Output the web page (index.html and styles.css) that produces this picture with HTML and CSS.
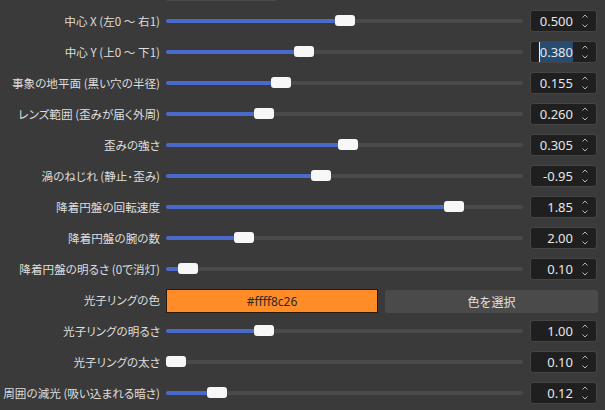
FILE: index.html
```html
<!DOCTYPE html>
<html lang="ja">
<head>
<meta charset="utf-8">
<link rel="stylesheet" href="styles.css">
</head>
<body>
<div class="panel">
  <div class="top-edge"><div class="top-btn"></div></div>

  <div class="row">
    <div class="label">中心 X (左0 〜 右1)</div>
    <div class="ctrl">
      <div class="slider" style="--v:0.5"><div class="fill"></div><div class="handle"></div></div>
      <div class="spin"><span class="val">0.500</span><span class="arrows"><svg viewBox="0 0 8 18" width="8" height="18"><path d="M1.5 5.5 4 3 6.5 5.5M1.5 12.5 4 15 6.5 12.5" fill="none" stroke="#b8b8b8" stroke-width="1"/></svg></span></div>
    </div>
  </div>

  <div class="row">
    <div class="label">中心 Y (上0 〜 下1)</div>
    <div class="ctrl">
      <div class="slider" style="--v:0.38"><div class="fill"></div><div class="handle"></div></div>
      <div class="spin"><span class="val"><span class="sel">0.380</span></span><span class="arrows"><svg viewBox="0 0 8 18" width="8" height="18"><path d="M1.5 5.5 4 3 6.5 5.5M1.5 12.5 4 15 6.5 12.5" fill="none" stroke="#b8b8b8" stroke-width="1"/></svg></span></div>
    </div>
  </div>

  <div class="row">
    <div class="label">事象の地平面 (黒い穴の半径)</div>
    <div class="ctrl">
      <div class="slider" style="--v:0.312"><div class="fill"></div><div class="handle"></div></div>
      <div class="spin"><span class="val">0.155</span><span class="arrows"><svg viewBox="0 0 8 18" width="8" height="18"><path d="M1.5 5.5 4 3 6.5 5.5M1.5 12.5 4 15 6.5 12.5" fill="none" stroke="#b8b8b8" stroke-width="1"/></svg></span></div>
    </div>
  </div>

  <div class="row">
    <div class="label">レンズ範囲 (歪みが届く外周)</div>
    <div class="ctrl">
      <div class="slider" style="--v:0.262"><div class="fill"></div><div class="handle"></div></div>
      <div class="spin"><span class="val">0.260</span><span class="arrows"><svg viewBox="0 0 8 18" width="8" height="18"><path d="M1.5 5.5 4 3 6.5 5.5M1.5 12.5 4 15 6.5 12.5" fill="none" stroke="#b8b8b8" stroke-width="1"/></svg></span></div>
    </div>
  </div>

  <div class="row">
    <div class="label">歪みの強さ</div>
    <div class="ctrl">
      <div class="slider" style="--v:0.51"><div class="fill"></div><div class="handle"></div></div>
      <div class="spin"><span class="val">0.305</span><span class="arrows"><svg viewBox="0 0 8 18" width="8" height="18"><path d="M1.5 5.5 4 3 6.5 5.5M1.5 12.5 4 15 6.5 12.5" fill="none" stroke="#b8b8b8" stroke-width="1"/></svg></span></div>
    </div>
  </div>

  <div class="row">
    <div class="label">渦のねじれ (静止･歪み)</div>
    <div class="ctrl">
      <div class="slider" style="--v:0.43"><div class="fill"></div><div class="handle"></div></div>
      <div class="spin"><span class="val">-0.95</span><span class="arrows"><svg viewBox="0 0 8 18" width="8" height="18"><path d="M1.5 5.5 4 3 6.5 5.5M1.5 12.5 4 15 6.5 12.5" fill="none" stroke="#b8b8b8" stroke-width="1"/></svg></span></div>
    </div>
  </div>

  <div class="row">
    <div class="label">降着円盤の回転速度</div>
    <div class="ctrl">
      <div class="slider" style="--v:0.825"><div class="fill"></div><div class="handle"></div></div>
      <div class="spin"><span class="val">1.85</span><span class="arrows"><svg viewBox="0 0 8 18" width="8" height="18"><path d="M1.5 5.5 4 3 6.5 5.5M1.5 12.5 4 15 6.5 12.5" fill="none" stroke="#b8b8b8" stroke-width="1"/></svg></span></div>
    </div>
  </div>

  <div class="row">
    <div class="label">降着円盤の腕の数</div>
    <div class="ctrl">
      <div class="slider" style="--v:0.203"><div class="fill"></div><div class="handle"></div></div>
      <div class="spin"><span class="val">2.00</span><span class="arrows"><svg viewBox="0 0 8 18" width="8" height="18"><path d="M1.5 5.5 4 3 6.5 5.5M1.5 12.5 4 15 6.5 12.5" fill="none" stroke="#b8b8b8" stroke-width="1"/></svg></span></div>
    </div>
  </div>

  <div class="row">
    <div class="label">降着円盤の明るさ (0で消灯)</div>
    <div class="ctrl">
      <div class="slider" style="--v:0.036"><div class="fill"></div><div class="handle"></div></div>
      <div class="spin"><span class="val">0.10</span><span class="arrows"><svg viewBox="0 0 8 18" width="8" height="18"><path d="M1.5 5.5 4 3 6.5 5.5M1.5 12.5 4 15 6.5 12.5" fill="none" stroke="#b8b8b8" stroke-width="1"/></svg></span></div>
    </div>
  </div>

  <div class="row">
    <div class="label">光子リングの色</div>
    <div class="ctrl color-ctrl">
      <div class="swatch">#ffff8c26</div>
      <button class="pick">色を選択</button>
    </div>
  </div>

  <div class="row">
    <div class="label">光子リングの明るさ</div>
    <div class="ctrl">
      <div class="slider" style="--v:0.262"><div class="fill"></div><div class="handle"></div></div>
      <div class="spin"><span class="val">1.00</span><span class="arrows"><svg viewBox="0 0 8 18" width="8" height="18"><path d="M1.5 5.5 4 3 6.5 5.5M1.5 12.5 4 15 6.5 12.5" fill="none" stroke="#b8b8b8" stroke-width="1"/></svg></span></div>
    </div>
  </div>

  <div class="row">
    <div class="label">光子リングの太さ</div>
    <div class="ctrl">
      <div class="slider" style="--v:0"><div class="fill"></div><div class="handle"></div></div>
      <div class="spin"><span class="val">0.10</span><span class="arrows"><svg viewBox="0 0 8 18" width="8" height="18"><path d="M1.5 5.5 4 3 6.5 5.5M1.5 12.5 4 15 6.5 12.5" fill="none" stroke="#b8b8b8" stroke-width="1"/></svg></span></div>
    </div>
  </div>

  <div class="row">
    <div class="label">周囲の減光 (吸い込まれる暗さ)</div>
    <div class="ctrl">
      <div class="slider" style="--v:0.121"><div class="fill"></div><div class="handle"></div></div>
      <div class="spin"><span class="val">0.12</span><span class="arrows"><svg viewBox="0 0 8 18" width="8" height="18"><path d="M1.5 5.5 4 3 6.5 5.5M1.5 12.5 4 15 6.5 12.5" fill="none" stroke="#b8b8b8" stroke-width="1"/></svg></span></div>
    </div>
  </div>
</div>
</body>
</html>
```

FILE: styles.css
```css
html, body {
  margin: 0;
  padding: 0;
  background: #3a3a3a;
  height: 100%;
  overflow: hidden;
}

.panel {
  width: 605px;
  display: flex;
  flex-direction: column;
  gap: 9px;
  font-family: "Noto Sans CJK JP", "Noto Sans", sans-serif;
  font-size: 11.6px;
  font-feature-settings: "palt" 1;
  color: #dedede;
}

.top-edge {
  height: 1px;
  margin-bottom: 0;
  padding-left: 166px;
}

.top-btn {
  width: 111px;
  height: 2px;
  margin-top: -1px;
  background: #4b4b4b;
  border-radius: 0 0 3px 3px;
}

.row {
  display: grid;
  grid-template-columns: 160px 1fr;
  column-gap: 6px;
  height: 22px;
  align-items: center;
  padding-right: 8px;
}

.label {
  text-align: right;
  white-space: nowrap;
  line-height: 22px;
}

.ctrl {
  display: flex;
  align-items: center;
  gap: 7px;
  height: 22px;
}

.slider {
  position: relative;
  flex: 1;
  height: 4px;
  background: #4a4a4a;
  border-radius: 2px;
}

.fill {
  height: 4px;
  width: calc((100% - 20px) * var(--v) + 10px);
  background: #4a6acb;
  border-radius: 2px;
}

.handle {
  position: absolute;
  top: -4px;
  left: calc((100% - 20px) * var(--v));
  width: 20px;
  height: 11px;
  background: #f7f7f7;
  border-radius: 3px;
}

.spin {
  width: 67px;
  height: 22px;
  box-sizing: border-box;
  background: #1f1f1f;
  border: 1px solid #454545;
  border-radius: 3px;
  display: flex;
  align-items: center;
  font-family: "Noto Sans", "Open Sans", sans-serif;
  font-size: 13px;
  font-feature-settings: normal;
  color: #e6e6e6;
}

.val {
  width: 42px;
  text-align: right;
  line-height: 18px;
}

.sel {
  background: #264c72;
  border-left: 1px solid #f0f0f0;
  padding: 1px 0;
}

.arrows {
  margin-left: 8px;
  display: flex;
  align-items: center;
}

.arrows svg {
  display: block;
}

.color-ctrl {
  display: grid;
  grid-template-columns: 1fr 1fr;
  gap: 7px;
  padding-right: 0;
}

.swatch {
  height: 24px;
  box-sizing: border-box;
  background: #ff8c26;
  border: 1px solid #2b1a08;
  color: #2a2a2a;
  display: flex;
  align-items: center;
  justify-content: center;
  font-family: "Noto Sans", "Open Sans", sans-serif;
  font-size: 12px;
  font-feature-settings: normal;
}

.pick {
  height: 23px;
  margin: 0;
  margin-right: -1px;
  border: none;
  border-radius: 3px;
  background: #4a4a4a;
  color: #e0e0e0;
  font-family: "Noto Sans CJK JP", sans-serif;
  font-size: 12px;
  padding: 0;
}
```
